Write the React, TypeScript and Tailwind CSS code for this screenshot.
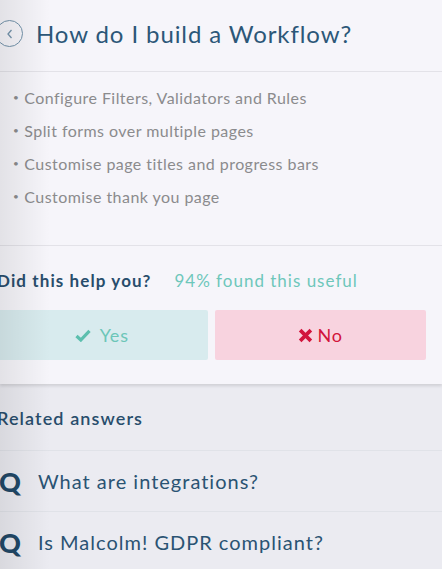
// FAQ answer view: workflow help article with feedback + related answers.

const BULLETS = [
  "Configure Filters, Validators and Rules",
  "Split forms over multiple pages",
  "Customise page titles and progress bars",
  "Customise thank you page",
];

const RELATED = ["What are integrations?", "Is Malcolm! GDPR compliant?"];

export default function App() {
  return (
    <div
      className="relative h-[569px] w-[442px] overflow-hidden bg-[#ebebf1]"
      style={{ fontFamily: "Lato, 'Open Sans', sans-serif" }}
    >
      <section className="relative z-10 bg-[#f6f5fa] shadow-[0_2px_3px_rgba(0,0,0,0.12)]">
        <header className="flex h-[72px] items-center border-b border-[#e3e2e8] pb-[4px]">
          <div className="-ml-[4px] flex h-[27px] w-[27px] shrink-0 items-center justify-center rounded-full border-[1.5px] border-[#7393ab]">
            <svg width="10" height="12" viewBox="0 0 10 12" fill="none">
              <path d="M6.5 2 L3 6 L6.5 10" stroke="#7393ab" strokeWidth="1.3" />
            </svg>
          </div>
          <h1 className="ml-[13px] whitespace-nowrap text-[24px] leading-none tracking-[0.9px] text-[#2c5778]">
            How do I build a Workflow?
          </h1>
        </header>

        <ul className="flex h-[174px] flex-col border-b border-[#e3e2e8] pt-[9px] pl-[13px]">
          {BULLETS.map((b) => (
            <li
              key={b}
              className="flex h-[33px] items-center whitespace-nowrap text-[16px] tracking-[0.45px] text-[#8b8b8d]"
            >
              <span className="mr-[5px] text-[10px]">•</span>
              {b}
            </li>
          ))}
        </ul>

        <div className="pb-[24px]">
          <div className="flex h-[64px] items-center whitespace-nowrap pt-[6px]">
            <span className="-ml-[3px] text-[17px] font-bold tracking-[1.1px] text-[#284d6c]">
              Did this help you?
            </span>
            <span className="ml-[23px] text-[17px] tracking-[1px] text-[#6ec7ba]">
              94% found this useful
            </span>
          </div>
          <div className="flex gap-[7px] pr-[16px]">
            <button className="-ml-[4px] flex h-[50px] flex-1 items-center justify-center gap-[9px] rounded-[2px] bg-[#d8ebee] text-[18px] tracking-[0.8px] text-[#6cc6b8]">
              <svg width="16" height="13" viewBox="0 0 16 13">
                <path d="M1.5 7 L5.8 11 L14.5 1.8" stroke="#5cbfae" strokeWidth="3.2" fill="none" />
              </svg>
              Yes
            </button>
            <button className="flex h-[50px] flex-1 items-center justify-center gap-[5px] rounded-[2px] bg-[#f8d3df] text-[18px] tracking-[0.8px] text-[#d2143c]">
              <svg width="15" height="15" viewBox="0 0 14 14">
                <path d="M2 2 L12 12 M12 2 L2 12" stroke="#d2143c" strokeWidth="3.4" />
              </svg>
              No
            </button>
          </div>
        </div>
      </section>

      <section>
        <div className="flex h-[67px] items-center border-b border-[#e0e2e8] pt-[3px]">
          <h2 className="-ml-[3px] whitespace-nowrap text-[18px] font-semibold tracking-[1.1px] text-[#284d6c]">
            Related answers
          </h2>
        </div>
        {RELATED.map((q) => (
          <div key={q} className="flex h-[61px] items-center border-b border-[#e0e2e8]">
            <span className="-ml-[1px] w-[39px] shrink-0 text-[27px] leading-none font-black text-[#214867]">
              Q
            </span>
            <span className="whitespace-nowrap text-[20px] tracking-[1px] text-[#2a5373]">{q}</span>
          </div>
        ))}
      </section>

      {/* left edge shading */}
      <div className="pointer-events-none absolute inset-y-0 left-0 z-20 w-[50px] bg-gradient-to-r from-[rgba(0,0,0,0.08)] to-transparent" />
    </div>
  );
}
